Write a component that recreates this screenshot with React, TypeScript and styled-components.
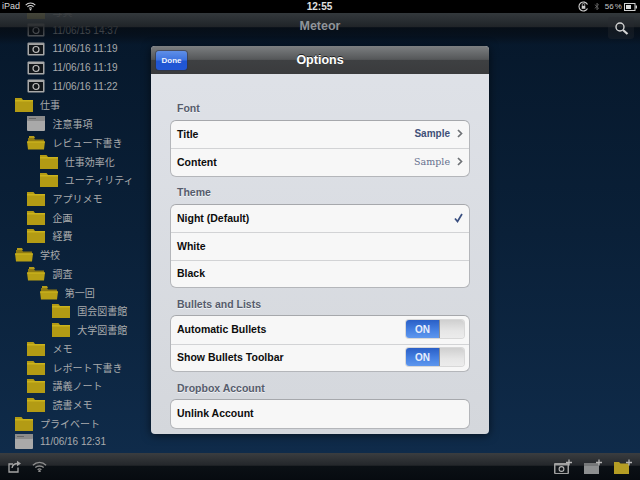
import styled, { createGlobalStyle } from 'styled-components';

const GlobalStyle = createGlobalStyle`
  html, body {
    margin: 0;
    padding: 0;
    background: #000;
  }
`;

type Kind = 'camera' | 'note' | 'folder' | 'open';

interface TreeRow {
  kind: Kind;
  depth: number;
  label: string;
}

const treeRows: TreeRow[] = [
  { kind: 'folder', depth: 1, label: '写真' },
  { kind: 'camera', depth: 1, label: '11/06/15 14:37' },
  { kind: 'camera', depth: 1, label: '11/06/16 11:19' },
  { kind: 'camera', depth: 1, label: '11/06/16 11:19' },
  { kind: 'camera', depth: 1, label: '11/06/16 11:22' },
  { kind: 'folder', depth: 0, label: '仕事' },
  { kind: 'note', depth: 1, label: '注意事項' },
  { kind: 'open', depth: 1, label: 'レビュー下書き' },
  { kind: 'folder', depth: 2, label: '仕事効率化' },
  { kind: 'folder', depth: 2, label: 'ユーティリティ' },
  { kind: 'folder', depth: 1, label: 'アプリメモ' },
  { kind: 'folder', depth: 1, label: '企画' },
  { kind: 'folder', depth: 1, label: '経費' },
  { kind: 'open', depth: 0, label: '学校' },
  { kind: 'open', depth: 1, label: '調査' },
  { kind: 'open', depth: 2, label: '第一回' },
  { kind: 'folder', depth: 3, label: '国会図書館' },
  { kind: 'folder', depth: 3, label: '大学図書館' },
  { kind: 'folder', depth: 1, label: 'メモ' },
  { kind: 'folder', depth: 1, label: 'レポート下書き' },
  { kind: 'folder', depth: 1, label: '講義ノート' },
  { kind: 'folder', depth: 1, label: '読書メモ' },
  { kind: 'folder', depth: 0, label: 'プライベート' },
  { kind: 'note', depth: 0, label: '11/06/16 12:31' },
];

const Screen = styled.div`
  width: 640px;
  height: 480px;
  position: relative;
  overflow: hidden;
  display: flex;
  flex-direction: column;
  font-family: 'Liberation Sans', 'Noto Sans CJK JP', sans-serif;
  background: #000;
`;

const StatusBar = styled.div`
  height: 13px;
  flex: none;
  display: flex;
  align-items: center;
  justify-content: space-between;
  padding: 0 3px 0 2px;
  background: #000;
  color: #d8d8d8;
  font-size: 9px;
  line-height: 13px;
  position: relative;
  z-index: 3;
`;

const StatusGroup = styled.div`
  display: flex;
  align-items: center;
  gap: 5px;
  width: 120px;
`;

const StatusRight = styled(StatusGroup)`
  justify-content: flex-end;
  gap: 5px;
`;

const BatteryText = styled.span`
  font-size: 8px;
  word-spacing: -1px;
  color: #c8c8c8;
  margin-right: -3px;
`;

const Clock = styled.span`
  font-size: 10px;
  font-weight: bold;
  color: #e0e0e0;
`;

const Content = styled.div`
  flex: 1;
  min-height: 0;
  position: relative;
  overflow: hidden;
  background: linear-gradient(180deg, #06172a 0%, #0a2038 50%, #0f2b4a 100%);
`;

const NavBar = styled.div`
  position: absolute;
  top: 0;
  left: 0;
  right: 0;
  height: 32px;
  display: flex;
  align-items: center;
  justify-content: center;
  background: linear-gradient(
    180deg,
    rgba(56, 60, 62, 0.9) 0%,
    rgba(34, 37, 40, 0.92) 43%,
    rgba(7, 11, 16, 0.74) 46%,
    rgba(6, 12, 20, 0.58) 72%,
    rgba(6, 18, 32, 0) 100%
  );
`;

const NavTitle = styled.div`
  color: #8f9499;
  font-size: 12.5px;
  font-weight: bold;
  margin-top: -6px;
`;

const SearchButton = styled.div`
  position: absolute;
  right: 6px;
  top: 4px;
  width: 26px;
  height: 22px;
  border-radius: 3px;
  display: flex;
  align-items: center;
  justify-content: center;
  background: rgba(40, 44, 48, 0.35);
`;

const TreeList = styled.div`
  display: flex;
  flex-direction: column;
  margin-top: -11px;
`;

const Row = styled.div<{ $depth: number }>`
  height: 18.72px;
  flex: none;
  display: flex;
  align-items: center;
  gap: 7px;
  padding-left: ${(p) => 15 + p.$depth * 12.4}px;
  color: #a9abad;
  font-size: 10px;
  white-space: nowrap;
`;

const Toolbar = styled.div`
  flex: none;
  height: 27px;
  display: flex;
  align-items: center;
  justify-content: space-between;
  padding: 0 8px;
  background: linear-gradient(180deg, #3a3d40 0%, #24272b 45%, #0b1015 50%, #070b10 100%);
`;

const ToolGroup = styled.div`
  display: flex;
  align-items: center;
  gap: 10px;
`;

const ToolGroupRight = styled(ToolGroup)`
  gap: 11px;
  margin-right: -1px;
`;

const Modal = styled.div`
  position: absolute;
  left: 151px;
  top: 46px;
  width: 338px;
  height: 388px;
  border-radius: 4px;
  overflow: hidden;
  background: linear-gradient(180deg, #dfe2e8 0%, #d4d7dc 100%);
  box-shadow: 0 1px 10px rgba(0, 0, 0, 0.6);
  display: flex;
  flex-direction: column;
  z-index: 2;
`;

const ModalHeader = styled.div`
  height: 28px;
  flex: none;
  position: relative;
  display: flex;
  align-items: center;
  justify-content: center;
  background: linear-gradient(180deg, #7c7f81 0%, #555759 48%, #3e4042 50%, #3a3b3d 100%);
`;

const ModalTitle = styled.div`
  color: #fff;
  font-size: 12.5px;
  font-weight: bold;
  text-shadow: 0 -1px 0 #222;
`;

const DoneButton = styled.div`
  position: absolute;
  left: 5px;
  top: 5px;
  width: 31px;
  height: 19px;
  border-radius: 3px;
  display: flex;
  align-items: center;
  justify-content: center;
  color: #eef3ff;
  font-size: 8px;
  font-weight: bold;
  background: linear-gradient(180deg, #5f8fe8 0%, #3d72df 48%, #1f55d2 52%, #2257d6 100%);
  box-shadow: 0 0 0 1px rgba(40, 50, 80, 0.55);
`;

const ModalBody = styled.div`
  flex: 1;
  display: flex;
  flex-direction: column;
  padding: 27px 19px 0;
`;

const SectionLabel = styled.div`
  height: 14px;
  line-height: 15px;
  padding-left: 7px;
  margin-bottom: 4.5px;
  color: #565c6c;
  font-size: 10.5px;
  font-weight: bold;
  text-shadow: 0 1px 0 #f0f2f5;
`;

const Group = styled.div`
  display: flex;
  flex-direction: column;
  flex: none;
  border: 1px solid #b4b6ba;
  border-top-color: #a6a8ac;
  border-radius: 6px;
  background: #f7f7f7;
  margin-bottom: 8.5px;
  overflow: hidden;
`;

const OptionRow = styled.div`
  height: 27.5px;
  box-sizing: border-box;
  flex: none;
  display: flex;
  align-items: center;
  justify-content: space-between;
  padding: 0 5px 1px 6px;
  color: #0c0c0c;
  font-size: 10.5px;
  font-weight: bold;
  & + & {
    border-top: 1px solid #d2d3d5;
  }
`;

const SampleValue = styled.span<{ $serif?: boolean }>`
  display: flex;
  align-items: center;
  gap: 7px;
  margin-right: 1px;
  color: ${(p) => (p.$serif ? '#66708e' : '#3f5078')};
  font-family: ${(p) => (p.$serif ? "'DejaVu Serif', serif" : "'Liberation Sans', sans-serif")};
  font-weight: ${(p) => (p.$serif ? 'normal' : 'bold')};
  font-size: ${(p) => (p.$serif ? '9.5px' : '10px')};
`;

const Switch = styled.div`
  width: 58px;
  height: 18px;
  display: flex;
  border-radius: 3px;
  overflow: hidden;
  box-shadow: 0 0 0 1px rgba(170, 170, 170, 0.4);
`;

const SwitchOn = styled.div`
  width: 33px;
  display: flex;
  align-items: center;
  justify-content: center;
  color: #e6edfb;
  font-size: 10px;
  font-weight: bold;
  background: linear-gradient(180deg, #2a5fc6 0%, #4580e2 55%, #5e97ee 100%);
`;

const SwitchThumb = styled.div`
  flex: 1;
  border-left: 1px solid #8a8d92;
  background: linear-gradient(180deg, #cfcfcf 0%, #e6e6e6 60%, #ececec 100%);
`;

const CheckMark = styled.svg`
  margin-right: 1px;
`;

function ItemIcon({ kind }: { kind: Kind }) {
  if (kind === 'camera') {
    return (
      <svg width="18" height="14" viewBox="0 0 18 14">
        <rect x="0.5" y="0.5" width="17" height="13" rx="1" fill="#a8a8a8" />
        <rect x="2" y="3" width="14" height="9" fill="#12161a" />
        <circle cx="9" cy="7.5" r="3" fill="none" stroke="#bdbdbd" strokeWidth="1.2" />
      </svg>
    );
  }
  if (kind === 'note') {
    return (
      <svg width="18" height="15" viewBox="0 0 18 15">
        <rect x="0" y="0" width="18" height="15" rx="1" fill="#a9a9a9" />
        <rect x="0" y="0" width="18" height="5" rx="1" fill="#8b8b8b" />
        <path d="M2 2.5h7" stroke="#666" strokeWidth="1" />
      </svg>
    );
  }
  if (kind === 'open') {
    return (
      <svg width="18" height="15" viewBox="0 0 18 15">
        <path d="M1 3h6l1 1.500h9v3H1z" fill="#8f7a12" />
        <path d="M2 1h5l1 2H2z" fill="#b59c1a" />
        <path d="M0 6.500h18l-1 8H1z" fill="#b8a015" />
        <path d="M0 6.500h18v1H0z" fill="#d0b820" />
      </svg>
    );
  }
  return (
    <svg width="18" height="15" viewBox="0 0 18 15">
      <path d="M0 1h6.500l1.500 2h10v12H0z" fill="#b39b14" />
      <path d="M0 3h18v1.500H0z" fill="#cbb31c" />
    </svg>
  );
}

function Plus() {
  return <path d="M15 0.500v6M12 3.500h6" stroke="#b5b5b5" strokeWidth="1.300" fill="none" />;
}

function WifiIcon({ size, color }: { size: number; color: string }) {
  return (
    <svg width={size} height={size * 0.75} viewBox="0 0 16 12" fill="none" stroke={color} strokeWidth="1.500">
      <path d="M1 4.500C5 0.500 11 0.500 15 4.500" />
      <path d="M3.500 7C6 4.700 10 4.700 12.500 7" />
      <path d="M6 9.300C7 8.400 9 8.400 10 9.300" />
      <circle cx="8" cy="11" r="0.600" fill={color} />
    </svg>
  );
}

function Chevron() {
  return (
    <svg width="6" height="9" viewBox="0 0 6 9" fill="none" stroke="#6f7276" strokeWidth="1.700">
      <path d="M1 1l3.500 3.500L1 8" />
    </svg>
  );
}

export default function App() {
  return (
    <Screen>
      <GlobalStyle />
      <StatusBar>
        <StatusGroup>
          <span>iPad</span>
          <WifiIcon size={11} color="#d8d8d8" />
        </StatusGroup>
        <Clock>12:55</Clock>
        <StatusRight>
          <svg width="11" height="11" viewBox="0 0 11 11" fill="none" stroke="#cfcfcf" strokeWidth="1.100">
            <path d="M9.500 7.500A4.500 4.500 0 1 1 9.500 3.500" />
            <rect x="3.700" y="4.800" width="3.600" height="3" fill="#cfcfcf" stroke="none" />
            <path d="M4.300 4.800V3.600a1.200 1.200 0 0 1 2.400 0v1.200" strokeWidth="0.800" />
          </svg>
          <svg width="6" height="11" viewBox="0 0 8 11" fill="none" stroke="#777" strokeWidth="1">
            <path d="M1 3l5 4.500L4 9.800V1.200l2 2.300L1 8" />
          </svg>
          <BatteryText>56 %</BatteryText>
          <svg width="13" height="8" viewBox="0 0 13 8">
            <rect x="0.500" y="0.500" width="10.500" height="7" fill="none" stroke="#d0d0d0" />
            <rect x="2" y="2" width="5" height="4" fill="#d8d8d8" />
            <rect x="11.500" y="2.500" width="1.500" height="3" fill="#d0d0d0" />
          </svg>
        </StatusRight>
      </StatusBar>

      <Content>
        <TreeList>
          {treeRows.map((row, i) => (
            <Row key={i} $depth={row.depth}>
              <ItemIcon kind={row.kind} />
              <span>{row.label}</span>
            </Row>
          ))}
        </TreeList>
        <NavBar>
          <NavTitle>Meteor</NavTitle>
          <SearchButton>
            <svg width="15" height="15" viewBox="0 0 15 15" fill="none" stroke="#d4d4d4">
              <circle cx="6" cy="6" r="4" strokeWidth="1.400" />
              <path d="M9 9l4.500 4" strokeWidth="2.200" />
            </svg>
          </SearchButton>
        </NavBar>
      </Content>

      <Toolbar>
        <ToolGroup>
          <svg width="14" height="13" viewBox="0 0 14 13" fill="none" stroke="#a5a5a5" strokeWidth="1.300">
            <path d="M10 7.500V12H1V4h4" />
            <path d="M4 8c0.500-3 3-4.500 6-4.500" />
            <path d="M9 0.800l4 2.700-4 2.700z" fill="#a5a5a5" stroke="none" />
          </svg>
          <WifiIcon size={15} color="#8d8d8d" />
        </ToolGroup>
        <ToolGroupRight>
          <svg width="19" height="15" viewBox="0 0 19 15">
            <rect x="0" y="4" width="15" height="11" rx="1" fill="#a0a0a0" />
            <rect x="1.500" y="6.500" width="12" height="7.500" fill="#14181c" />
            <circle cx="7.500" cy="10" r="2.400" fill="none" stroke="#b5b5b5" strokeWidth="1.100" />
            <Plus />
          </svg>
          <svg width="19" height="15" viewBox="0 0 19 15">
            <rect x="0" y="4" width="15" height="11" fill="#8d8f90" />
            <rect x="0" y="4" width="15" height="3" fill="#767879" />
            <Plus />
          </svg>
          <svg width="19" height="15" viewBox="0 0 19 15">
            <path d="M0 3h5l1.500 1.500H15V15H0z" fill="#b59d24" />
            <Plus />
          </svg>
        </ToolGroupRight>
      </Toolbar>

      <Modal>
        <ModalHeader>
          <DoneButton>Done</DoneButton>
          <ModalTitle>Options</ModalTitle>
        </ModalHeader>
        <ModalBody>
          <SectionLabel>Font</SectionLabel>
          <Group>
            <OptionRow>
              <span>Title</span>
              <SampleValue>
                Sample
                <Chevron />
              </SampleValue>
            </OptionRow>
            <OptionRow>
              <span>Content</span>
              <SampleValue $serif>
                Sample
                <Chevron />
              </SampleValue>
            </OptionRow>
          </Group>

          <SectionLabel>Theme</SectionLabel>
          <Group>
            <OptionRow>
              <span>Night (Default)</span>
              <CheckMark width="9" height="10" viewBox="0 0 9 10" fill="none" stroke="#3a4f80" strokeWidth="1.700">
                <path d="M1 5.500l2.500 3L8 1" />
              </CheckMark>
            </OptionRow>
            <OptionRow>White</OptionRow>
            <OptionRow>Black</OptionRow>
          </Group>

          <SectionLabel>Bullets and Lists</SectionLabel>
          <Group>
            <OptionRow>
              <span>Automatic Bullets</span>
              <Switch>
                <SwitchOn>ON</SwitchOn>
                <SwitchThumb />
              </Switch>
            </OptionRow>
            <OptionRow>
              <span>Show Bullets Toolbar</span>
              <Switch>
                <SwitchOn>ON</SwitchOn>
                <SwitchThumb />
              </Switch>
            </OptionRow>
          </Group>

          <SectionLabel>Dropbox Account</SectionLabel>
          <Group>
            <OptionRow>Unlink Account</OptionRow>
          </Group>
        </ModalBody>
      </Modal>
    </Screen>
  );
}
